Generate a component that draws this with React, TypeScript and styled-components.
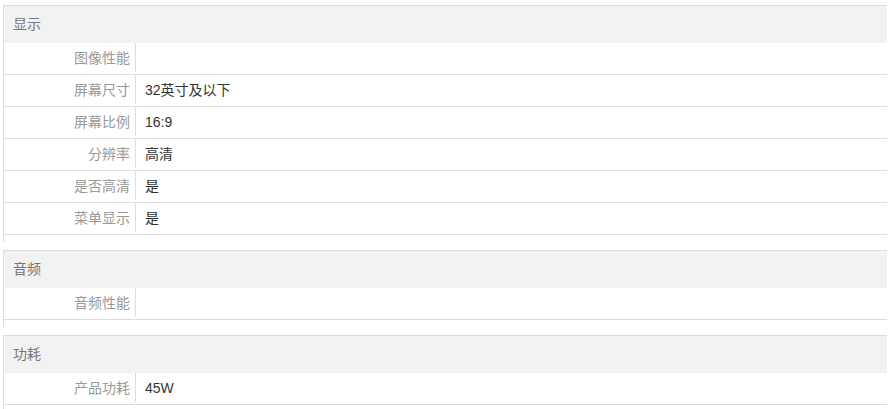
import React from "react";
import styled, { createGlobalStyle } from "styled-components";

const Global = createGlobalStyle`
  html, body { margin: 0; padding: 0; background: #fff; }
  body { font-family: "Liberation Sans", "Noto Sans CJK SC", sans-serif; }
`;

const Page = styled.div`
  padding: 5px 3px 0 3px;
`;

const Section = styled.section`
  border-top: 1px solid #dddddd;
  border-left: 1px solid #dddddd;
  padding-bottom: 7px;
  margin-bottom: 8px;
`;

const Header = styled.div`
  height: 37px;
  line-height: 37px;
  background: #f2f2f2;
  padding-left: 9px;
  font-size: 14px;
  color: #777;
`;

const Row = styled.div`
  display: flex;
  height: 31px;
  border-bottom: 1px solid #dddddd;
  font-size: 14px;
`;

const Label = styled.div`
  width: 131px;
  box-sizing: border-box;
  padding-right: 5px;
  text-align: right;
  line-height: 31px;
  color: #999;
  flex-shrink: 0;
`;

const Divider = styled.div`
  width: 1px;
  height: 29px;
  background: #dddddd;
  align-self: flex-start;
`;

const Value = styled.div`
  padding-left: 9px;
  line-height: 31px;
  color: #333;
`;

const data: { title: string; rows: [string, string][] }[] = [
  {
    title: "显示",
    rows: [
      ["图像性能", ""],
      ["屏幕尺寸", "32英寸及以下"],
      ["屏幕比例", "16:9"],
      ["分辨率", "高清"],
      ["是否高清", "是"],
      ["菜单显示", "是"],
    ],
  },
  { title: "音频", rows: [["音频性能", ""]] },
  { title: "功耗", rows: [["产品功耗", "45W"]] },
];

export default function App() {
  return (
    <Page>
      <Global />
      {data.map((s) => (
        <Section key={s.title}>
          <Header>{s.title}</Header>
          {s.rows.map(([k, v]) => (
            <Row key={k}>
              <Label>{k}</Label>
              <Divider />
              <Value>{v}</Value>
            </Row>
          ))}
        </Section>
      ))}
    </Page>
  );
}
